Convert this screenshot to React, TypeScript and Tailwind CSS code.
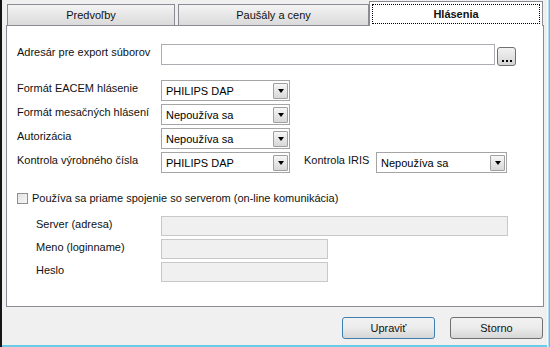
import React from "react";

const font = { fontFamily: '"Liberation Sans", Arial, sans-serif' };

const Arrow = () => (
    <div className="w-[15px] h-[16px] mr-[1px] border border-[#a0a0a0] rounded-[1px] bg-gradient-to-b from-[#f6f6f6] to-[#d8d8d8] flex items-center justify-center">
        <div className="w-0 h-0 border-l-[3.5px] border-r-[3.5px] border-t-[4px] border-l-transparent border-r-transparent border-t-black" />
    </div>
);

const Select = ({ value, width }: { value: string; width: string }) => (
    <div className={`${width} h-[21px] border border-[#a5a5a5] bg-white flex items-center shrink-0`}>
        <span className="flex-1 pl-[4px] pt-[2px] text-[#000] whitespace-nowrap">{value}</span>
        <Arrow />
    </div>
);

const Label = ({ text }: { text: string }) => (
    <div className="w-[144px] shrink-0 -mt-[4px] whitespace-nowrap">{text}</div>
);

const Tab = ({ text, width, active }: { text: string; width: string; active?: boolean }) =>
    active ? (
        <div className={`${width} h-[25px] -mb-[1px] border border-b-0 border-[#898c95] bg-white flex p-[2px] relative z-10`}>
            <div className="flex-1 border border-dotted border-black flex items-center justify-center font-bold">{text}</div>
        </div>
    ) : (
        <div className={`${width} h-[21px] border border-[#898c95] border-b-0 bg-gradient-to-b from-[#f4f4f4] to-[#dadada] flex items-center justify-center`}>
            {text}
        </div>
    );

const Button = ({ text, primary }: { text: string; primary?: boolean }) => (
    <div
        className={`w-[93px] h-[22px] rounded-[3px] border ${primary ? "border-[#3c7fb1]" : "border-[#707070]"} bg-gradient-to-b from-[#f2f2f2] via-[#ebebeb] to-[#d6d6d6] flex items-center justify-center`}
    >
        {text}
    </div>
);

export default function App() {
    return (
        <div className="w-[550px] h-[347px] bg-[#f0f0f0] flex text-[11px] text-[#111] overflow-hidden" style={font}>
            <div className="w-[2px] bg-[#151515]" />
            <div className="flex-1 flex flex-col">
                <div className="flex-1 flex flex-col pl-[4px] pr-[2px]">
                    {/* tabs */}
                    <div className="h-[25px] flex items-end pl-[1px]">
                        <Tab text="Predvoľby" width="w-[168px]" />
                        <div className="w-[3px]" />
                        <Tab text="Paušály a ceny" width="w-[191px]" />
                        <Tab text="Hlásenia" width="w-[174px]" active />
                    </div>
                    {/* panel */}
                    <div className="w-[538px] h-[282px] border border-[#898c95] bg-white pl-[10px] pt-[18px] flex flex-col">
                        <div className="flex items-center h-[21px]">
                            <Label text="Adresár pre export súborov" />
                            <div className="w-[334px] h-[21px] border border-[#abadb3] bg-white" />
                            <div className="ml-[2px] mt-[3px] w-[19px] h-[19px] rounded-[3px] border border-[#707070] bg-gradient-to-b from-[#f2f2f2] to-[#d6d6d6] flex items-end justify-center pb-[3px] gap-[2px]">
                                <div className="w-[2px] h-[2px] bg-black" />
                                <div className="w-[2px] h-[2px] bg-black" />
                                <div className="w-[2px] h-[2px] bg-black" />
                            </div>
                        </div>

                        <div className="flex flex-col gap-[3px] mt-[15px]">
                            <div className="flex items-center">
                                <Label text="Formát EACEM hlásenie" />
                                <Select value="PHILIPS DAP" width="w-[129px]" />
                            </div>
                            <div className="flex items-center">
                                <Label text="Formát mesačných hlásení" />
                                <Select value="Nepoužíva sa" width="w-[129px]" />
                            </div>
                            <div className="flex items-center">
                                <Label text="Autorizácia" />
                                <Select value="Nepoužíva sa" width="w-[129px]" />
                            </div>
                            <div className="flex items-center">
                                <Label text="Kontrola výrobného čísla" />
                                <Select value="PHILIPS DAP" width="w-[129px]" />
                                <div className="w-[86px] pl-[14px] -mt-[4px] shrink-0 whitespace-nowrap">Kontrola IRIS</div>
                                <Select value="Nepoužíva sa" width="w-[131px]" />
                            </div>
                        </div>

                        <div className="flex items-center mt-[19px] h-[13px]">
                            <div className="w-[11px] h-[11px] border border-[#8f8f8f] bg-gradient-to-br from-[#e4e4e4] to-[#f6f6f6]" />
                            <span className="ml-[4px]">Používa sa priame spojenie so serverom (on-line komunikácia)</span>
                        </div>

                        <div className="flex flex-col gap-[3px] mt-[11px] pl-[19px]">
                            <div className="flex items-center">
                                <div className="w-[125px] shrink-0 -mt-[3px]">Server (adresa)</div>
                                <div className="w-[347px] h-[20px] border border-[#c8c8c8] bg-[#f0f0f0]" />
                            </div>
                            <div className="flex items-center">
                                <div className="w-[125px] shrink-0 -mt-[3px]">Meno (loginname)</div>
                                <div className="w-[167px] h-[20px] border border-[#c8c8c8] bg-[#f0f0f0]" />
                            </div>
                            <div className="flex items-center">
                                <div className="w-[125px] shrink-0 -mt-[3px]">Heslo</div>
                                <div className="w-[167px] h-[20px] border border-[#c8c8c8] bg-[#f0f0f0]" />
                            </div>
                        </div>
                    </div>
                    {/* buttons */}
                    <div className="flex justify-end gap-[15px] pt-[10px] pr-[2px]">
                        <Button text="Upraviť" primary />
                        <Button text="Storno" />
                    </div>
                </div>
                <div className="h-[2px] bg-[#6ccbe6]" />
            </div>
            <div className="w-[3px] flex">
                <div className="w-[1px] bg-[#f8f8f8]" />
                <div className="w-[1px] bg-[#a8def0]" />
                <div className="w-[1px] bg-[#5cc6e6]" />
            </div>
        </div>
    );
}
